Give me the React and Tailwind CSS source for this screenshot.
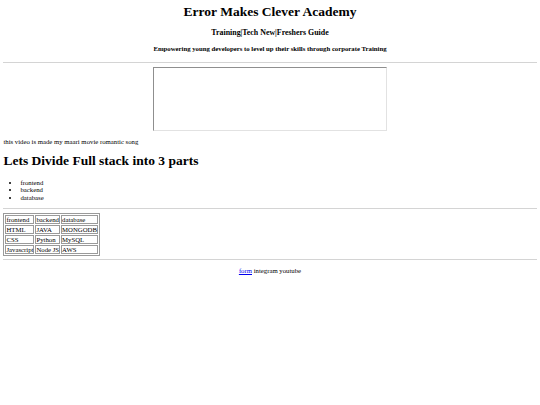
// App.jsx - plain academy landing page
const stack = [
  ['frontend', 'backend', 'database'],
  ['HTML', 'JAVA', 'MONGODB'],
  ['CSS', 'Python', 'MySQL'],
  ['Javascript', 'Node JS', 'AWS'],
];

function Rule({ className = '' }) {
  return <div className={`h-[1.5px] bg-[#d4d4d4] ${className}`} />;
}

export default function App() {
  return (
    <div className="min-h-[405px] bg-white px-[3.4px] text-black font-['Liberation_Serif','Times_New_Roman',serif]">
      <header className="text-center">
        <h1 className="pt-[4px] text-[13.5px] leading-[16px] font-bold">Error Makes Clever Academy</h1>
        <h3 className="mt-[7.5px] text-[7.9px] leading-[9px] font-bold">Training|Tech New|Freshers Guide</h3>
        <h4 className="mt-[8.5px] text-[6.75px] leading-[8px] font-bold">
          Empowering young developers to level up their skills through corporate Training
        </h4>
      </header>

      <Rule className="mt-[8.5px]" />

      <div className="mt-[3.5px] flex justify-center">
        <div className="w-[234px] h-[64px] border border-t-[#8f8f8f] border-l-[#8f8f8f] border-r-[#e2e2e2] border-b-[#e2e2e2] bg-white" />
      </div>

      <p className="mt-[7px] text-[6.75px] leading-[8px]">this video is made my maari movie romantic song</p>

      <h2 className="mt-[7.5px] text-[13.5px] leading-[16px] font-bold">Lets Divide Full stack into 3 parts</h2>

      <ul className="mt-[9.5px] pl-[17px] list-disc text-[6.75px] leading-[7.8px]">
        <li>frontend</li>
        <li>backend</li>
        <li>database</li>
      </ul>

      <Rule className="mt-[6px]" />

      <table className="mt-[4px] border border-[#9a9a9a] border-separate border-spacing-[1px] text-[6.75px] leading-[7px]">
        <tbody>
          {stack.map((row, i) => (
            <tr key={i}>
              {row.map(cell => (
                <td key={cell} className="border border-[#9a9a9a] px-0 py-0 text-left">
                  {cell}
                </td>
              ))}
            </tr>
          ))}
        </tbody>
      </table>

      <Rule className="mt-[2.5px]" />

      <footer className="mt-[6.5px] text-center text-[6.75px] leading-[8px]">
        <a href="#" className="text-[#0000ee] underline">form</a> integram youtube
      </footer>
    </div>
  );
}
